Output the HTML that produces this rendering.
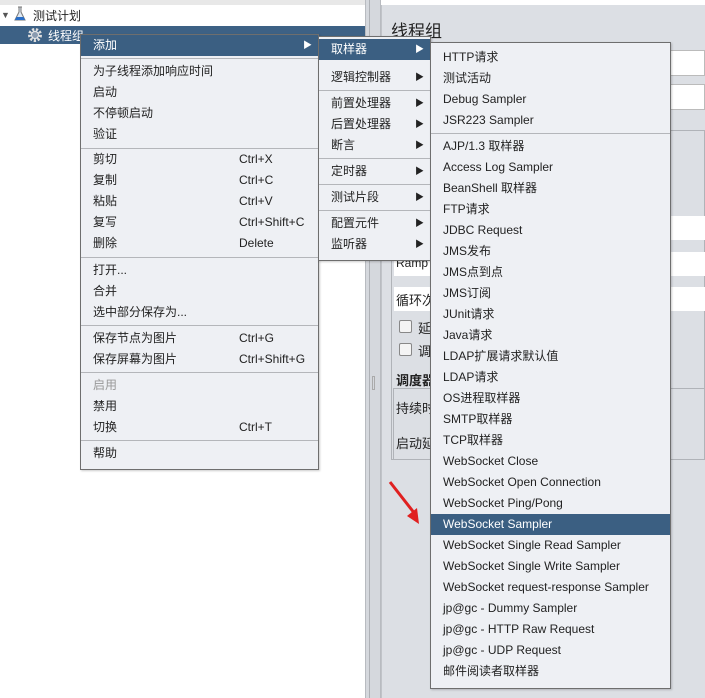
<!DOCTYPE html>
<html><head><meta charset="utf-8"><style>
*{margin:0;padding:0;box-sizing:border-box}
body{width:705px;height:698px;overflow:hidden;background:#fff;position:relative;font-family:"Liberation Sans","Noto Sans CJK SC",sans-serif;font-size:12px;color:#222}
.abs{position:absolute}
.menu{position:absolute;background:#eef0f4;border:1px solid #6e6e6e;box-shadow:1px 1px 2px rgba(0,0,0,.2)}
.it{position:absolute;left:0;right:0;height:21px;line-height:21px;white-space:nowrap}
.it .t{position:absolute;left:12px}
.it .s{position:absolute;left:158px}
.it .a{position:absolute;right:6px;font-size:9px}
.sel{background:#3b5f82;color:#fff}
.sep{position:absolute;left:0;right:0;height:1px;background:#b4b6ba}
.dis{color:#999}
</style></head><body>
<!-- top strip -->
<div class="abs" style="left:0;top:0;width:365px;height:5px;background:#e8e8e8"></div>
<!-- tree -->
<div class="abs" style="left:1px;top:10px;font-size:9px;color:#555">▼</div>
<svg class="abs" style="left:13px;top:6px" width="14" height="16"><path d="M5 1h4M6 1v5L2 14h10L8 6V1" fill="#dfe8f3" stroke="#777"/><path d="M3.5 11h7l1.5 3H2z" fill="#2a6fc9"/></svg>
<div class="abs" style="left:33px;top:7px">测试计划</div>
<div class="abs" style="left:0;top:26px;width:365px;height:18px;background:#3d6185"></div>
<svg class="abs" style="left:27px;top:27px" width="16" height="16"><circle cx="8" cy="8" r="5.5" fill="none" stroke="#ddd" stroke-width="3" stroke-dasharray="2.2 1.6"/><circle cx="8" cy="8" r="3.5" fill="#8a9bb0" stroke="#eee"/></svg>
<div class="abs" style="left:48px;top:27px;color:#fff">线程组</div>
<!-- divider -->
<div class="abs" style="left:365px;top:0;width:16px;height:698px;background:#d5d8dd;border-left:1px solid #b8bbc0;border-right:1px solid #b8bbc0"></div>
<div class="abs" style="left:369px;top:0;width:1px;height:698px;background:#aeb1b6"></div>
<div class="abs" style="left:372px;top:376px;width:3px;height:14px;border:1px solid #aaa"></div>
<!-- right panel -->
<div class="abs" style="left:381px;top:5px;width:324px;height:693px;background:#dcdfe4;border-left:1px solid #c0c3c8"></div>
<div class="abs" style="left:391px;top:17px;font-size:17px;color:#222">线程组</div>
<div class="abs" style="left:391px;top:50px;width:314px;height:26px;background:#fff;border:1px solid #bbb"></div>
<div class="abs" style="left:391px;top:84px;width:314px;height:26px;background:#fff;border:1px solid #bbb"></div>
<div class="abs" style="left:391px;top:130px;width:314px;height:330px;border:1px solid #b0b3b8"></div>
<div class="abs" style="left:394px;top:216px;width:311px;height:24px;background:#fff"></div>
<div class="abs" style="left:394px;top:252px;width:311px;height:24px;background:#fff"></div>
<div class="abs" style="left:394px;top:287px;width:311px;height:24px;background:#fff"></div>
<div class="abs" style="left:396px;top:256px;font-size:12px">Ramp</div>
<div class="abs" style="left:396px;top:290px;font-size:13px">循环次</div>
<div class="abs" style="left:399px;top:320px;width:13px;height:13px;border:1px solid #888;border-radius:2px;background:#f4f4f4"></div>
<div class="abs" style="left:418px;top:318px;font-size:13px">延</div>
<div class="abs" style="left:399px;top:343px;width:13px;height:13px;border:1px solid #888;border-radius:2px;background:#f4f4f4"></div>
<div class="abs" style="left:418px;top:341px;font-size:13px">调</div>
<div class="abs" style="left:396px;top:370px;font-size:13px;font-weight:bold">调度器</div>
<div class="abs" style="left:393px;top:388px;width:312px;height:72px;border:1px solid #b0b3b8"></div>
<div class="abs" style="left:396px;top:398px;font-size:13px">持续时</div>
<div class="abs" style="left:396px;top:433px;font-size:13px">启动延</div>
<!-- red arrow -->
<svg class="abs" style="left:385px;top:478px" width="40" height="50"><path d="M5 4L30 36" stroke="#e02020" stroke-width="3"/><path d="M22 38L34 46L32 30z" fill="#e02020"/></svg>

<!-- menu 1 -->
<div class="menu" style="left:80px;top:34px;width:239px;height:436px">
<div class="it sel" style="top:0"><span class="t">添加</span><span class="a">▶</span></div>
<div class="sep" style="top:23px"></div>
<div class="it" style="top:26px"><span class="t">为子线程添加响应时间</span></div>
<div class="it" style="top:47px"><span class="t">启动</span></div>
<div class="it" style="top:68px"><span class="t">不停顿启动</span></div>
<div class="it" style="top:89px"><span class="t">验证</span></div>
<div class="sep" style="top:113px"></div>
<div class="it" style="top:114px"><span class="t">剪切</span><span class="s">Ctrl+X</span></div>
<div class="it" style="top:135px"><span class="t">复制</span><span class="s">Ctrl+C</span></div>
<div class="it" style="top:156px"><span class="t">粘贴</span><span class="s">Ctrl+V</span></div>
<div class="it" style="top:177px"><span class="t">复写</span><span class="s">Ctrl+Shift+C</span></div>
<div class="it" style="top:198px"><span class="t">删除</span><span class="s">Delete</span></div>
<div class="sep" style="top:222px"></div>
<div class="it" style="top:225px"><span class="t">打开...</span></div>
<div class="it" style="top:246px"><span class="t">合并</span></div>
<div class="it" style="top:267px"><span class="t">选中部分保存为...</span></div>
<div class="sep" style="top:290px"></div>
<div class="it" style="top:293px"><span class="t">保存节点为图片</span><span class="s">Ctrl+G</span></div>
<div class="it" style="top:314px"><span class="t">保存屏幕为图片</span><span class="s">Ctrl+Shift+G</span></div>
<div class="sep" style="top:337px"></div>
<div class="it dis" style="top:340px"><span class="t">启用</span></div>
<div class="it" style="top:361px"><span class="t">禁用</span></div>
<div class="it" style="top:382px"><span class="t">切换</span><span class="s">Ctrl+T</span></div>
<div class="sep" style="top:405px"></div>
<div class="it" style="top:408px"><span class="t">帮助</span></div>
</div>

<!-- menu 2 -->
<div class="menu" style="left:318px;top:36px;width:113px;height:225px">
<div class="it sel" style="top:2px"><span class="t">取样器</span><span class="a">▶</span></div>
<div class="it" style="top:30px"><span class="t">逻辑控制器</span><span class="a">▶</span></div>
<div class="sep" style="top:53px"></div>
<div class="it" style="top:56px"><span class="t">前置处理器</span><span class="a">▶</span></div>
<div class="it" style="top:77px"><span class="t">后置处理器</span><span class="a">▶</span></div>
<div class="it" style="top:98px"><span class="t">断言</span><span class="a">▶</span></div>
<div class="sep" style="top:121px"></div>
<div class="it" style="top:124px"><span class="t">定时器</span><span class="a">▶</span></div>
<div class="sep" style="top:147px"></div>
<div class="it" style="top:150px"><span class="t">测试片段</span><span class="a">▶</span></div>
<div class="sep" style="top:173px"></div>
<div class="it" style="top:176px"><span class="t">配置元件</span><span class="a">▶</span></div>
<div class="it" style="top:197px"><span class="t">监听器</span><span class="a">▶</span></div>
</div>

<!-- menu 3 -->
<div class="menu" style="left:430px;top:42px;width:241px;height:647px">
<div class="it" style="top:4px"><span class="t">HTTP请求</span></div>
<div class="it" style="top:25px"><span class="t">测试活动</span></div>
<div class="it" style="top:46px"><span class="t">Debug Sampler</span></div>
<div class="it" style="top:67px"><span class="t">JSR223 Sampler</span></div>
<div class="sep" style="top:90px"></div>
<div class="it" style="top:93px"><span class="t">AJP/1.3 取样器</span></div>
<div class="it" style="top:114px"><span class="t">Access Log Sampler</span></div>
<div class="it" style="top:135px"><span class="t">BeanShell 取样器</span></div>
<div class="it" style="top:156px"><span class="t">FTP请求</span></div>
<div class="it" style="top:177px"><span class="t">JDBC Request</span></div>
<div class="it" style="top:198px"><span class="t">JMS发布</span></div>
<div class="it" style="top:219px"><span class="t">JMS点到点</span></div>
<div class="it" style="top:240px"><span class="t">JMS订阅</span></div>
<div class="it" style="top:261px"><span class="t">JUnit请求</span></div>
<div class="it" style="top:282px"><span class="t">Java请求</span></div>
<div class="it" style="top:303px"><span class="t">LDAP扩展请求默认值</span></div>
<div class="it" style="top:324px"><span class="t">LDAP请求</span></div>
<div class="it" style="top:345px"><span class="t">OS进程取样器</span></div>
<div class="it" style="top:366px"><span class="t">SMTP取样器</span></div>
<div class="it" style="top:387px"><span class="t">TCP取样器</span></div>
<div class="it" style="top:408px"><span class="t">WebSocket Close</span></div>
<div class="it" style="top:429px"><span class="t">WebSocket Open Connection</span></div>
<div class="it" style="top:450px"><span class="t">WebSocket Ping/Pong</span></div>
<div class="it sel" style="top:471px"><span class="t">WebSocket Sampler</span></div>
<div class="it" style="top:492px"><span class="t">WebSocket Single Read Sampler</span></div>
<div class="it" style="top:513px"><span class="t">WebSocket Single Write Sampler</span></div>
<div class="it" style="top:534px"><span class="t">WebSocket request-response Sampler</span></div>
<div class="it" style="top:555px"><span class="t">jp@gc - Dummy Sampler</span></div>
<div class="it" style="top:576px"><span class="t">jp@gc - HTTP Raw Request</span></div>
<div class="it" style="top:597px"><span class="t">jp@gc - UDP Request</span></div>
<div class="it" style="top:618px"><span class="t">邮件阅读者取样器</span></div>
</div>
</body></html>
